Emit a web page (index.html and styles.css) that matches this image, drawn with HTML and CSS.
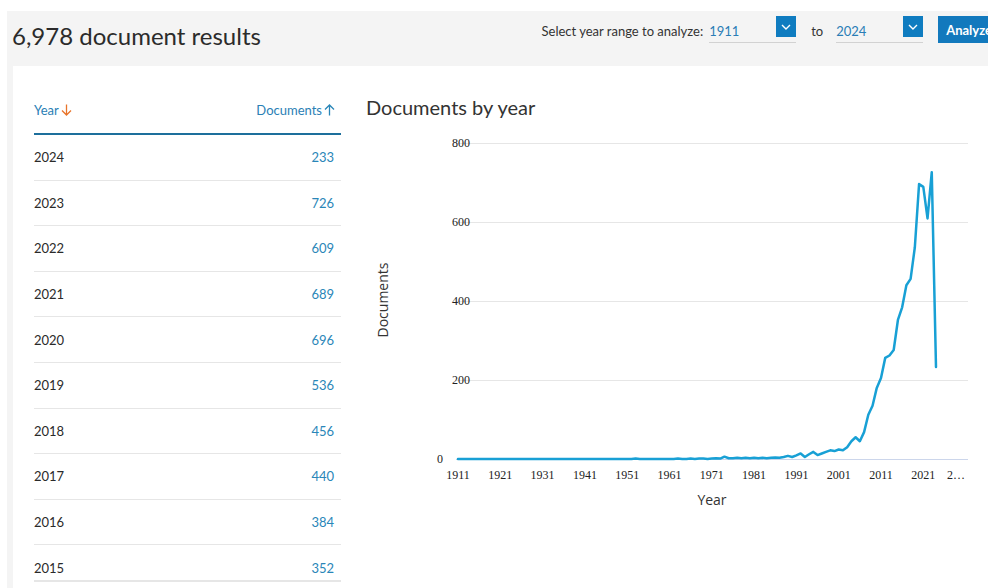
FILE: index.html
```html
<!DOCTYPE html>
<html lang="en">
<head>
<meta charset="utf-8">
<title>Analyze search results</title>
<link rel="stylesheet" href="styles.css">
</head>
<body>
<div class="page">
  <header class="topbar">
    <h1 class="results-title">6,978 document results</h1>
    <div class="range">
      <span class="range-label">Select year range to analyze:</span>
      <div class="select">
        <span class="select-value">1911</span>
        <span class="select-btn"><svg width="10" height="6" viewBox="0 0 10 6"><path d="M1 1l4 4 4-4" fill="none" stroke="#fff" stroke-width="1.4"/></svg></span>
      </div>
      <span class="range-to">to</span>
      <div class="select">
        <span class="select-value">2024</span>
        <span class="select-btn"><svg width="10" height="6" viewBox="0 0 10 6"><path d="M1 1l4 4 4-4" fill="none" stroke="#fff" stroke-width="1.4"/></svg></span>
      </div>
      <button class="analyze-btn">Analyze</button>
    </div>
  </header>

  <main class="panel">
    <section class="year-table">
      <div class="thead">
        <span class="th">Year <svg class="arrow" width="11" height="12" viewBox="0 0 11 12"><path d="M5.5 0.5v10M1 6.5l4.5 4.5 4.5-4.5" fill="none" stroke="#e8742a" stroke-width="1.3"/></svg></span>
        <span class="th">Documents <svg class="arrow" width="11" height="12" viewBox="0 0 11 12"><path d="M5.5 11.5v-10M1 5.5l4.5-4.5 4.5 4.5" fill="none" stroke="#2a86b8" stroke-width="1.3"/></svg></span>
      </div>
      <div class="tr"><span class="yr">2024</span><span class="num">233</span></div>
      <div class="tr"><span class="yr">2023</span><span class="num">726</span></div>
      <div class="tr"><span class="yr">2022</span><span class="num">609</span></div>
      <div class="tr"><span class="yr">2021</span><span class="num">689</span></div>
      <div class="tr"><span class="yr">2020</span><span class="num">696</span></div>
      <div class="tr"><span class="yr">2019</span><span class="num">536</span></div>
      <div class="tr"><span class="yr">2018</span><span class="num">456</span></div>
      <div class="tr"><span class="yr">2017</span><span class="num">440</span></div>
      <div class="tr"><span class="yr">2016</span><span class="num">384</span></div>
      <div class="tr tr-last"><span class="yr">2015</span><span class="num">352</span></div>
    </section>

    <section class="chart">
      <h2 class="chart-title">Documents by year</h2>
      <svg class="chart-svg" width="622" height="400" viewBox="0 0 622 400">
        <!-- grid -->
        <g stroke="#e6e6e6" stroke-width="1">
          <line x1="90" y1="15.5" x2="602" y2="15.5"/>
          <line x1="90" y1="94.5" x2="602" y2="94.5"/>
          <line x1="90" y1="173.5" x2="602" y2="173.5"/>
          <line x1="90" y1="252.5" x2="602" y2="252.5"/>
        </g>
        <line x1="90" y1="331.5" x2="602" y2="331.5" stroke="#ccd6eb" stroke-width="1"/>

        <!-- y axis -->
        <g class="tick" text-anchor="end">
          <text x="104" y="19">800</text>
          <text x="104" y="98">600</text>
          <text x="104" y="177">400</text>
          <text x="104" y="256">200</text>
          <text x="77" y="335">0</text>
        </g>
        <text class="axis-title" transform="translate(22 172) rotate(-90)" text-anchor="middle">Documents</text>

        <!-- x axis -->
        <g class="tick" text-anchor="middle">
          <text x="92" y="351">1911</text>
          <text x="134.3" y="351">1921</text>
          <text x="176.6" y="351">1931</text>
          <text x="218.9" y="351">1941</text>
          <text x="261.2" y="351">1951</text>
          <text x="303.5" y="351">1961</text>
          <text x="345.8" y="351">1971</text>
          <text x="388.1" y="351">1981</text>
          <text x="430.4" y="351">1991</text>
          <text x="472.7" y="351">2001</text>
          <text x="515" y="351">2011</text>
          <text x="557.3" y="351">2021</text>
          <text x="590" y="351">2…</text>
        </g>
        <text class="axis-title" x="346" y="377" text-anchor="middle">Year</text>

        <!-- series: documents per year, 1911–2024 -->
        <g transform="translate(92 331) scale(4.23 -0.395)">
          <polyline fill="none" stroke="#18a0d5" stroke-width="2.5" stroke-linejoin="round" stroke-linecap="round" vector-effect="non-scaling-stroke"
            points="0,0 41,0 42,1 43,0 51,0 52,1 53,0 54,0 55,1 56,0 57,1 58,1 59,0 60,1 61,2 62,1 63,6 64,2 65,2 66,3 67,2 68,3 69,2 70,3 71,2 72,3 73,2 74,3 75,4 76,3 77,5 78,8 79,5 80,9 81,14 82,5 83,12 84,18 85,10 86,14 87,18 88,22 89,20 90,24 91,22 92,30 93,45 94,55 95,45 96,68 97,112 98,135 99,180 100,205 101,256 102,262 103,276 104,352 105,384 106,440 107,456 108,536 109,696 110,689 111,609 112,726 113,233"/>
        </g>
      </svg>
    </section>
  </main>
</div>
</body>
</html>
```

FILE: styles.css
```css
html, body {
  margin: 0;
  padding: 0;
  height: 588px;
  overflow: hidden;
  background: #fff;
  font-family: Lato, "Liberation Sans", sans-serif;
  color: #2e2e2e;
}

.page {
  margin: 11px 0 0 7px;
  width: 1010px;
  height: 600px;
  background: #f4f4f4;
  display: flex;
  flex-direction: column;
}

/* header strip */
.topbar {
  height: 55px;
  flex: none;
  display: flex;
  align-items: center;
  padding-left: 5px;
  padding-right: 17px;
}

.results-title {
  margin: 0;
  padding-bottom: 7px;
  font-size: 24px;
  font-weight: 400;
  color: #2b2b2b;
  letter-spacing: 0;
}

.range {
  margin-left: auto;
  align-self: flex-start;
  margin-top: 5px;
  display: flex;
  align-items: center;
  font-size: 13px;
}

.range-label {
  color: #333;
  margin-right: 6px;
  margin-top: 3px;
}

.select {
  width: 87px;
  height: 26px;
  border-bottom: 1px solid #d2d2d2;
  display: flex;
  align-items: flex-start;
}

.select-value {
  color: #2a7db6;
  line-height: 21px;
  padding-top: 5px;
}

.select-btn {
  margin-left: auto;
  width: 20px;
  height: 21px;
  background: #0f7cc0;
  display: flex;
  align-items: center;
  justify-content: center;
}

.range-to {
  margin: 3px 13px 0 15px;
  color: #333;
}

.analyze-btn {
  margin-left: 15px;
  height: 27px;
  padding: 0 8px;
  border: 0;
  background: #1279bd;
  color: #fff;
  font-family: inherit;
  font-size: 13px;
  font-weight: 700;
}

/* white content panel */
.panel {
  flex: 1;
  margin-left: 6px;
  background: #fff;
  display: flex;
  align-items: flex-start;
  padding: 20px 0 0 21px;
}

.year-table {
  width: 307px;
  flex: none;
  font-size: 13px;
}

.thead {
  height: 47px;
  border-bottom: 2px solid #1d6f9c;
  display: flex;
  align-items: center;
  justify-content: space-between;
  padding-right: 6px;
}

.th {
  color: #2a80b5;
  display: flex;
  align-items: center;
  gap: 2px;
}

.arrow {
  display: block;
}

.tr {
  box-sizing: border-box;
  height: 45.6px;
  border-bottom: 1px solid #e6e6e6;
  display: flex;
  align-items: center;
  justify-content: space-between;
  padding-right: 7px;
}

.tr-last {
  height: 37px;
  border-bottom-width: 2px;
  align-items: flex-end;
  padding-bottom: 4px;
}

.yr {
  color: #2a2a2a;
}

.num {
  color: #2a86b8;
}

/* chart */
.chart {
  margin-left: 25px;
  flex: none;
  display: flex;
  flex-direction: column;
}

.chart-title {
  margin: 9px 0 0;
  font-size: 20px;
  line-height: 24px;
  font-weight: 400;
  color: #333;
}

.chart-svg {
  display: block;
  margin-top: 9px;
}

.tick text {
  font-family: "Liberation Serif", serif;
  font-size: 12px;
  fill: #222;
}

.axis-title {
  font-family: "Open Sans", sans-serif;
  font-size: 14px;
  fill: #333;
}
```
